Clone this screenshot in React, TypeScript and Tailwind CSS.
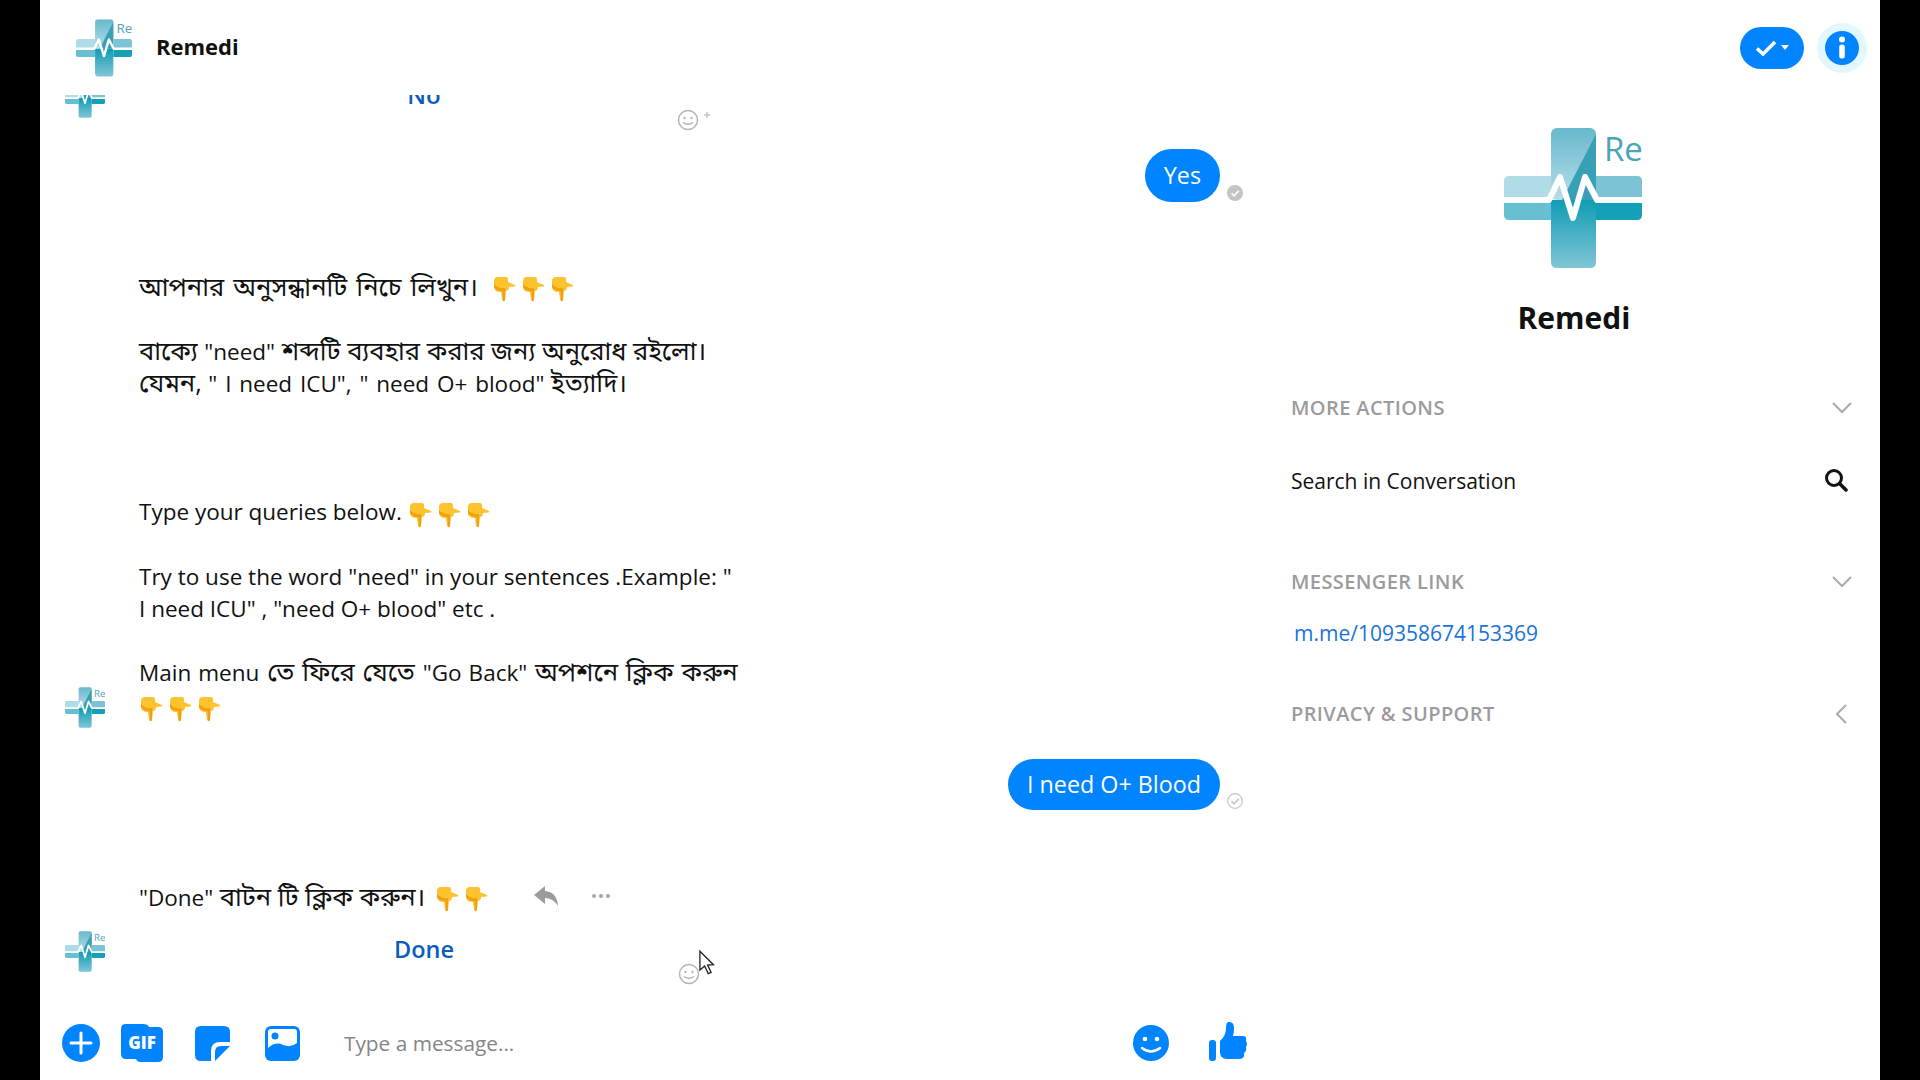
import React from "react";

const blue = "#0084ff";

const Logo = ({ className }: { className: string }) => (
  <svg viewBox="0 0 138 140" className={className}>
    <defs>
      <linearGradient id="lgTop" x1="0" y1="0" x2="0" y2="1">
        <stop offset="0" stopColor="#68b8cc" />
        <stop offset="1" stopColor="#b5dfe9" />
      </linearGradient>
      <linearGradient id="lgLow" x1="0" y1="0" x2="0" y2="1">
        <stop offset="0" stopColor="#109cb4" />
        <stop offset="1" stopColor="#80c6d6" />
      </linearGradient>
    </defs>
    <rect x="47" y="0" width="45" height="72" rx="6" fill="url(#lgTop)" />
    <path d="M92 6 V72 H58 Z" fill="#37a0b6" />
    <path d="M5 48 H47 V72 H0 V53 Q0 48 5 48 Z" fill="#b0dce7" />
    <path d="M92 48 H133 Q138 48 138 53 V72 H92 Z" fill="#7cc3d5" />
    <path d="M0 72 H47 V92 H5 Q0 92 0 87 Z" fill="#68bfd1" />
    <path d="M92 72 H138 V87 Q138 92 133 92 H92 Z" fill="#14a0b6" />
    <path d="M47 72 H92 V134 Q92 140 86 140 H53 Q47 140 47 134 Z" fill="url(#lgLow)" />
    <path d="M0 72 H45 L56 49 L69 90 L81 49 L93 72 H138" fill="none" stroke="#fff" strokeWidth="6" strokeLinejoin="round" />
    <text x="100" y="33" fontSize="33" fill="#4aa5b8" fontFamily="'Open Sans', sans-serif">Rem</text>
  </svg>
);

const Hand = () => (
  <svg viewBox="0 0 24 28" className="inline-block h-[28px] w-[24px] shrink-0">
    <path d="M2 7 Q2 3 6 3 H14 Q16 3 16 5 V8 L23 11 Q24 12 22.500 12.500 L17 13 Q17 17 13.500 17 L13 26 Q11.500 28 10 26 L9 18 Q2 18 2 13 Z" fill="#fdc32e" />
    <path d="M2 10 Q6 15 13 14 L13.500 17 L13 26 Q12 28 11 27 L10.500 17 Q4 17 2 13 Z" fill="#f0a010" />
  </svg>
);

const Hands = ({ count, className }: { count: number; className?: string }) => (
  <span className={`inline-flex gap-[5px] align-middle ${className ?? ""}`}>
    {Array.from({ length: count }).map((_, i) => (
      <Hand key={i} />
    ))}
  </span>
);

// latin runs are set a bit smaller than the bengali around them
const L = ({ children, className }: { children: React.ReactNode; className?: string }) => (
  <span className={`text-[22.500px] ${className ?? ""}`}>{children}</span>
);

const FaintSmile = ({ plus }: { plus?: boolean }) => (
  <svg viewBox="0 0 36 24" className="h-[24px] w-[36px]">
    <circle cx="12" cy="13" r="9.500" fill="none" stroke="#b5b5b5" strokeWidth="1.500" />
    <circle cx="8.500" cy="11" r="1.200" fill="#b5b5b5" />
    <circle cx="15.500" cy="11" r="1.200" fill="#b5b5b5" />
    <path d="M7 15.500 Q12 19 17 15.500" fill="none" stroke="#b5b5b5" strokeWidth="1.500" />
    {plus && <path d="M31 5 V11 M28 8 H34" stroke="#c4c4c4" strokeWidth="1.500" />}
  </svg>
);

const SentCheck = ({ filled }: { filled?: boolean }) => (
  <svg viewBox="0 0 16 16" className="mb-[1px] ml-[7px] h-[16px] w-[16px]">
    <circle cx="8" cy="8" r={filled ? 8 : 7.300} fill={filled ? "#c4c4c4" : "#fff"} stroke="#c4c4c4" strokeWidth={filled ? 0 : 1.200} />
    <path d="M4.500 8.300 L7 10.800 L11.800 5.800" fill="none" stroke={filled ? "#fff" : "#c4c4c4"} strokeWidth="1.600" />
  </svg>
);

const Chevron = ({ left }: { left?: boolean }) => (
  <svg viewBox="0 0 22 22" className="h-[22px] w-[22px]">
    <path d={left ? "M15 2 L6 11 L15 20" : "M2 6 L11 15 L20 6"} fill="none" stroke="#ababab" strokeWidth="2" />
  </svg>
);

const SectionTitle = ({ title, className, left }: { title: string; className: string; left?: boolean }) => (
  <div className={`flex h-[24px] items-center justify-between text-[20px] font-semibold tracking-[0.4px] text-[#9b9b9b] ${className}`}>
    <span>{title}</span>
    <Chevron left={left} />
  </div>
);

const Bubble = ({ text, filled, className }: { text: string; filled?: boolean; className: string }) => (
  <div className={`flex items-end justify-end pr-[22px] ${className}`}>
    <div className="flex h-full items-center rounded-full bg-[#0084ff] px-[19px] text-[23.300px] text-white">{text}</div>
    <SentCheck filled={filled} />
  </div>
);

export default function App() {
  return (
    <div className="flex h-screen w-full overflow-hidden bg-black font-['Open_Sans','Noto_Sans','Noto_Sans_Bengali',sans-serif] text-[#111]">
      <div className="ml-[40px] flex w-[1840px] flex-col bg-white">
        <header className="flex h-[95px] shrink-0 items-center pl-[36px] pr-[13px]">
          <Logo className="h-[58px] w-[56px]" />
          <span className="mb-[2px] ml-[24px] text-[22px] font-bold">Remedi</span>
          <div className="ml-auto flex items-center gap-[13px]">
            <div className="flex h-[42px] w-[64px] items-center justify-center gap-[4px] rounded-full bg-[#0084ff]">
              <svg viewBox="0 0 22 16" className="h-[16px] w-[22px]">
                <path d="M2 8.500 L8 14 L20 2" fill="none" stroke="#fff" strokeWidth="3.500" />
              </svg>
              <svg viewBox="0 0 8 5" className="h-[5px] w-[8px]">
                <path d="M0 0 H8 L4 5 Z" fill="#fff" />
              </svg>
            </div>
            <div className="flex h-[50px] w-[50px] items-center justify-center rounded-full bg-[#e3f7ff]">
              <svg viewBox="0 0 34 34" className="h-[34px] w-[34px]">
                <circle cx="17" cy="17" r="17" fill={blue} />
                <circle cx="17" cy="8.500" r="3" fill="#fff" />
                <rect x="14.200" y="13.500" width="5.600" height="14" rx="2.500" fill="#fff" />
              </svg>
            </div>
          </div>
        </header>

        <div className="flex min-h-0 flex-1">
          <main className="flex w-[1225px] shrink-0 flex-col">
            <div className="flex h-[905px] shrink-0 flex-col overflow-hidden">
              {/* quick reply cut off by the header */}
              <div className="-mt-[23px] flex h-[50px] shrink-0 items-center pl-[25px]">
                <Logo className="h-[41px] w-[40px]" />
                <div className="ml-[34px] w-[570px] pb-[4px] text-center text-[24px] font-semibold text-[#0a5dbf]">No</div>
                <div className="-ml-[33px] mt-[44px]">
                  <FaintSmile plus />
                </div>
              </div>

              <Bubble text="Yes" filled className="mt-[27px] h-[53px] shrink-0" />

              <div className="mt-[68px] shrink-0 pl-[99px] text-[25.500px] leading-[32px]">
                <div className="flex h-[32px] items-center">
                  <span className="[word-spacing:2.500px]">আপনার অনুসন্ধানটি নিচে লিখুন।</span>
                  <Hands count={3} className="ml-[14px] mt-[4px]" />
                </div>
                <div className="mt-[32px] h-[32px]">বাক্যে <L>"need"</L> শব্দটি ব্যবহার করার জন্য অনুরোধ রইলো।</div>
                <div className="h-[32px]">যেমন, <L className="[word-spacing:2px]">" I need ICU", " need O+ blood"</L> ইত্যাদি।</div>
              </div>

              <div className="mt-[98px] shrink-0 pl-[99px] text-[22.500px] leading-[32px]">
                <div className="flex h-[32px] items-center">
                  <span>Type your queries below.</span>
                  <Hands count={3} className="ml-[6px] mt-[3px]" />
                </div>
                <div className="mt-[33px] h-[32px]">Try to use the word "need" in your sentences .Example: "</div>
                <div className="h-[32px]">I need ICU" , "need O+ blood" etc .</div>
              </div>

              <div className="mt-[30px] flex shrink-0 items-end pl-[25px]">
                <Logo className="h-[41px] w-[40px]" />
                <div className="ml-[34px] pb-[6px] text-[25.500px] leading-[32px]">
                  <div className="h-[32px] [word-spacing:1.200px]"><L>Main menu</L> তে ফিরে যেতে <L>"Go Back"</L> অপশনে ক্লিক করুন</div>
                  <div className="mt-[2px] h-[33px]">
                    <Hands count={3} />
                  </div>
                </div>
              </div>

              <Bubble text="I need O+ Blood" className="mt-[31px] h-[51px] shrink-0" />

              <div className="mt-[70px] flex h-[32px] shrink-0 items-center pl-[99px] text-[25.500px]">
                <span><L>"Done"</L> বাটন টি ক্লিক করুন।</span>
                <Hands count={2} className="ml-[10px] mt-[3px]" />
                <svg viewBox="0 0 24 20" className="ml-[46px] h-[20px] w-[24px]">
                  <path d="M11 0 L0 9 L11 18 V12 Q19 12 24 20 Q23 6 11 5 Z" fill="#9b9b9b" />
                </svg>
                <div className="ml-[34px] flex gap-[3px]">
                  <span className="h-[4px] w-[4px] rounded-full bg-[#a5a5a5]" />
                  <span className="h-[4px] w-[4px] rounded-full bg-[#a5a5a5]" />
                  <span className="h-[4px] w-[4px] rounded-full bg-[#a5a5a5]" />
                </div>
              </div>

              <div className="relative mt-[19px] flex h-[41px] shrink-0 items-center pl-[25px]">
                <Logo className="h-[41px] w-[40px]" />
                <div className="ml-[34px] w-[570px] pb-[4px] text-center text-[23.500px] font-semibold text-[#0a5dbf]">Done</div>
                <div className="-ml-[32px] mt-[43px]">
                  <FaintSmile />
                </div>
                <svg viewBox="0 0 14 22" className="absolute left-[658px] top-[19px] h-[26px] w-[18px]">
                  <path d="M1 1 V17 L5 13.500 L8 20 L10.500 19 L7.500 12.800 L12.500 12.500 Z" fill="#fff" stroke="#222" strokeWidth="1.100" />
                </svg>
              </div>
            </div>

            <div className="flex h-[80px] shrink-0 items-center pt-[6px]">
              <svg viewBox="0 0 38 38" className="ml-[22px] h-[38px] w-[38px]">
                <circle cx="19" cy="19" r="19" fill={blue} />
                <path d="M19 9 V29 M9 19 H29" stroke="#fff" strokeWidth="3" strokeLinecap="round" />
              </svg>
              <svg viewBox="0 0 42 38" className="ml-[21px] h-[38px] w-[42px]">
                <path d="M5 0 H22 Q27 0 28 3 H37 Q42 3 42 8 V33 Q42 38 37 38 H20 Q16 38 15 35 H5 Q0 35 0 30 V5 Q0 0 5 0 Z" fill={blue} />
                <text x="21" y="25" textAnchor="middle" fontSize="17" fontWeight="800" fill="#fff" fontFamily="'Open Sans', sans-serif">GIF</text>
              </svg>
              <svg viewBox="0 0 35 35" className="ml-[32px] h-[35px] w-[35px]">
                <path d="M6 0 H29 Q35 0 35 6 V16 H25 Q16 16 16 25 V35 H6 Q0 35 0 29 V6 Q0 0 6 0 Z" fill={blue} />
                <path d="M35 20 L20 35 V26 Q20 20 26 20 Z" fill={blue} />
              </svg>
              <svg viewBox="0 0 35 35" className="ml-[35px] h-[35px] w-[35px]">
                <rect width="35" height="35" rx="6" fill={blue} />
                <rect x="3" y="3" width="29" height="24" rx="3" fill="#fff" />
                <circle cx="10" cy="10" r="3.500" fill={blue} />
                <path d="M3 22 Q11 15 18 19 Q26 22 32 17 V32 H3 Z" fill={blue} />
              </svg>
              <span className="ml-[44px] mt-[2px] text-[20.800px] text-[#858585]">Type a message...</span>
              <svg viewBox="0 0 36 36" className="ml-auto h-[36px] w-[36px]">
                <circle cx="18" cy="18" r="18" fill={blue} />
                <circle cx="12" cy="14" r="2.300" fill="#fff" />
                <circle cx="24" cy="14" r="2.300" fill="#fff" />
                <path d="M9 23 Q18 30 27 23" fill="none" stroke="#fff" strokeWidth="2.500" strokeLinecap="round" />
              </svg>
              <svg viewBox="0 0 39 40" className="mb-[4px] ml-[40px] mr-[17px] h-[40px] w-[39px]">
                <rect x="0" y="19" width="7" height="21" rx="3" fill={blue} />
                <path d="M19 1 Q25 0 25 7 Q25 12 24 15 H34 Q38 15 37 20 Q39 23 37 26 Q38 30 35 32 Q36 38 30 38 H18 Q11 38 11 31 V20 Q17 15 17 7 Q17 2 19 1 Z" fill={blue} />
              </svg>
            </div>
          </main>

          <aside className="flex min-w-0 flex-1 flex-col pl-[26px] pr-[27px]">
            <Logo className="ml-[213px] mt-[33px] h-[140px] w-[138px] shrink-0" />
            <div className="ml-[4px] mt-[30px] h-[40px] text-center text-[30px] font-bold leading-[40px]">Remedi</div>
            <SectionTitle title="MORE ACTIONS" className="mt-[58px]" />
            <div className="mt-[45px] flex h-[32px] items-center justify-between pr-[5px] text-[21px]">
              <span className="mt-[2px]">Search in Conversation</span>
              <svg viewBox="0 0 24 24" className="mb-[2px] h-[24px] w-[24px]">
                <circle cx="10" cy="10" r="7.500" fill="none" stroke="#111" strokeWidth="3" />
                <path d="M15.500 15.500 L22 22" stroke="#111" strokeWidth="3.500" strokeLinecap="round" />
              </svg>
            </div>
            <SectionTitle title="MESSENGER LINK" className="mt-[73px]" />
            <div className="ml-[3px] mt-[24px] h-[30px] text-[21px] leading-[30px] text-[#1a73d8]">m.me/109358674153369</div>
            <SectionTitle title="PRIVACY & SUPPORT" className="mt-[54px]" left />
          </aside>
        </div>
      </div>
    </div>
  );
}
